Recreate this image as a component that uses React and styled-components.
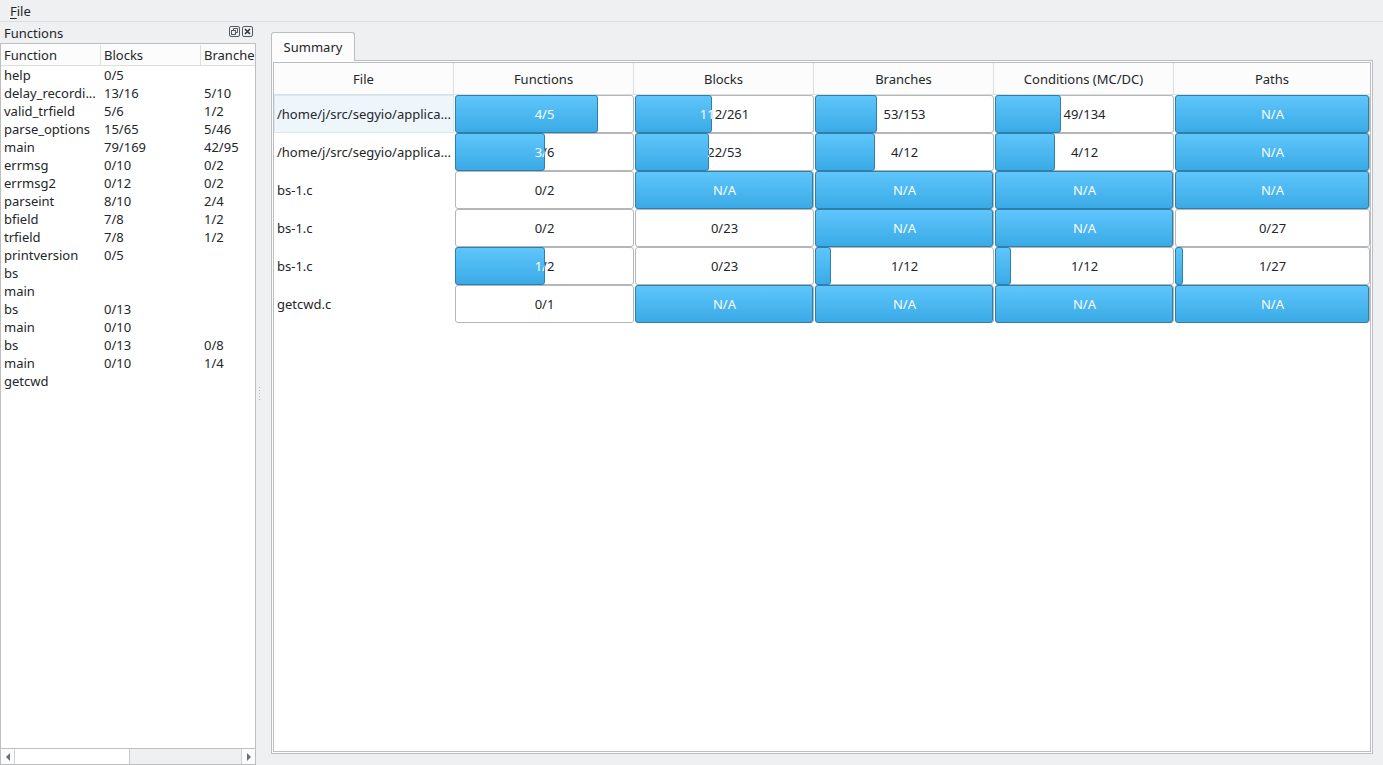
import React from "react";
import styled, { createGlobalStyle } from "styled-components";

const GlobalStyle = createGlobalStyle`
  html, body { margin: 0; padding: 0; }
  body {
    font-family: "Noto Sans", "DejaVu Sans", sans-serif;
    font-size: 13px;
    color: #232629;
    background: #eff0f1;
  }
  * { box-sizing: border-box; }
`;

const functions = [
  ["help", "0/5", ""],
  ["delay_recordi...", "13/16", "5/10"],
  ["valid_trfield", "5/6", "1/2"],
  ["parse_options", "15/65", "5/46"],
  ["main", "79/169", "42/95"],
  ["errmsg", "0/10", "0/2"],
  ["errmsg2", "0/12", "0/2"],
  ["parseint", "8/10", "2/4"],
  ["bfield", "7/8", "1/2"],
  ["trfield", "7/8", "1/2"],
  ["printversion", "0/5", ""],
  ["bs", "", ""],
  ["main", "", ""],
  ["bs", "0/13", ""],
  ["main", "0/10", ""],
  ["bs", "0/13", "0/8"],
  ["main", "0/10", "1/4"],
  ["getcwd", "", ""],
];

const NA = null;
const files = [
  { name: "/home/j/src/segyio/applica...", hover: true, cells: [[4, 5], [112, 261], [53, 153], [49, 134], NA] },
  { name: "/home/j/src/segyio/applica...", cells: [[3, 6], [22, 53], [4, 12], [4, 12], NA] },
  { name: "bs-1.c", cells: [[0, 2], NA, NA, NA, NA] },
  { name: "bs-1.c", cells: [[0, 2], [0, 23], NA, NA, [0, 27]] },
  { name: "bs-1.c", cells: [[1, 2], [0, 23], [1, 12], [1, 12], [1, 27]] },
  { name: "getcwd.c", cells: [[0, 1], NA, NA, NA, NA] },
];

const columns = ["File", "Functions", "Blocks", "Branches", "Conditions (MC/DC)", "Paths"];

const Window = styled.div`
  width: 1383px;
  height: 765px;
  display: flex;
  flex-direction: column;
  background: #eff0f1;
  overflow: hidden;
`;

const MenuBar = styled.div`
  height: 22px;
  display: flex;
  align-items: center;
  border-bottom: 1px solid #dcdee0;
`;

const MenuItem = styled.span`
  padding: 0 10px;
  line-height: 20px;
  u { text-decoration: underline; text-underline-offset: 2px; }
`;

const Main = styled.div`
  flex: 1;
  display: flex;
  min-height: 0;
`;

const Dock = styled.div`
  width: 256px;
  display: flex;
  flex-direction: column;
`;

const DockTitle = styled.div`
  height: 21px;
  display: flex;
  align-items: center;
  justify-content: space-between;
  padding: 0 3px 0 4px;
`;

const DockButtons = styled.div`
  display: flex;
  gap: 2px;
  margin-top: -2px;
  svg { display: block; }
`;

const Tree = styled.div`
  flex: 1;
  display: flex;
  flex-direction: column;
  background: #fff;
  border: 1px solid #bcbebf;
  min-height: 0;
  overflow: hidden;
`;

const TreeHeader = styled.div`
  height: 22px;
  display: flex;
  padding-top: 1px;
  border-bottom: 1px solid #dcdee0;
  background: #fcfcfc;
`;

const TreeHeadCell = styled.div`
  width: ${(p) => p.$w || 100}px;
  flex: none;
  padding-left: 3px;
  line-height: 20px;
  white-space: nowrap;
  overflow: hidden;
  border-right: 1px solid #dcdee0;
  &:last-child { border-right: none; }
`;

const TreeBody = styled.div`
  flex: 1;
`;

const TreeRow = styled.div`
  height: 18px;
  display: flex;
  align-items: center;
`;

const TreeCell = styled.div`
  width: 100px;
  flex: none;
  padding-left: 3px;
  white-space: nowrap;
  overflow: hidden;
`;

const HScroll = styled.div`
  height: 16px;
  display: flex;
  border-top: 1px solid #bcbebf;
`;

const ScrollArrow = styled.div`
  width: 14px;
  display: flex;
  align-items: center;
  justify-content: center;
  background: #fcfcfc;
  border-${(p) => (p.$right ? "left" : "right")}: 1px solid #d0d2d3;
`;

const ScrollThumb = styled.div`
  width: 115px;
  background: #fff;
  border-right: 1px solid #c8cacb;
`;

const ScrollTrack = styled.div`
  flex: 1;
  background: #eff0f1;
`;

const Splitter = styled.div`
  width: 15px;
  display: flex;
  align-items: center;
  padding-left: 3px;
`;

const Grip = styled.div`
  width: 1px;
  height: 14px;
  background: repeating-linear-gradient(#b8babc 0 1px, transparent 1px 3px);
`;

const TabArea = styled.div`
  flex: 1;
  display: flex;
  flex-direction: column;
  padding: 10px 10px 11px 0;
`;

const TabBar = styled.div`
  height: 28px;
  display: flex;
  align-items: flex-end;
`;

const Tab = styled.div`
  width: 84px;
  height: 29px;
  margin-bottom: -1px;
  position: relative;
  z-index: 1;
  background: #fcfcfc;
  border: 1px solid #bcbebf;
  border-bottom: none;
  border-radius: 3px 3px 0 0;
  display: flex;
  align-items: center;
  justify-content: center;
  padding-bottom: 1px;
`;

const Pane = styled.div`
  flex: 1;
  display: flex;
  background: #fcfcfc;
  border: 1px solid #bcbebf;
  padding: 1px;
`;

const Table = styled.div`
  flex: 1;
  background: #fff;
  border: 1px solid #bcbebf;
  display: flex;
  flex-direction: column;
`;

const Grid = styled.div`
  display: grid;
  grid-template-columns: repeat(5, 180px) 1fr;
`;

const HeadCell = styled.div`
  height: 32px;
  display: flex;
  align-items: center;
  justify-content: center;
  background: #fcfcfc;
  border-right: 1px solid #dcdee0;
  border-bottom: 1px solid #dcdee0;
  &:nth-child(6) { border-right: none; }
`;

const FileCell = styled.div`
  height: 38px;
  display: flex;
  align-items: center;
  padding-left: 2px;
  white-space: nowrap;
  background: ${(p) => (p.$hover ? "#eef6fc" : "#fff")};
  border: 1px solid ${(p) => (p.$hover ? "#d4e9f7" : "transparent")};
`;

const BarBox = styled.div`
  position: relative;
  height: 38px;
  border: 1px solid #b4b6b8;
  border-radius: 3px;
  background: #fff;
  display: flex;
  align-items: center;
  justify-content: center;
  margin: 0 0 0 1px;
`;

const Fill = styled.div`
  position: absolute;
  left: -1px;
  top: -1px;
  bottom: -1px;
  border: 1px solid #2f7fad;
  border-radius: 3px;
  background: linear-gradient(#5ec6fb, #3aaae6);
`;

const WhiteText = styled.div`
  position: absolute;
  inset: 0;
  display: flex;
  align-items: center;
  justify-content: center;
  color: #fcfcfc;
`;

function Bar({ value }) {
  const text = value ? `${value[0]}/${value[1]}` : "N/A";
  const pct = value ? (value[0] / value[1]) * 100 : 100;
  return (
    <BarBox>
      <span>{text}</span>
      {pct > 0 && (
        <>
          <Fill style={{ width: `calc(${pct}% + 1px)` }} />
          <WhiteText style={{ clipPath: `inset(0 ${100 - pct}% 0 0)` }}>{text}</WhiteText>
        </>
      )}
    </BarBox>
  );
}

function FloatIcon() {
  return (
    <svg width="11" height="11" viewBox="0 0 11 11">
      <rect x="0.5" y="0.5" width="10" height="10" rx="1.5" fill="none" stroke="#555a5e" />
      <rect x="2.5" y="4.5" width="4" height="4" fill="none" stroke="#555a5e" />
      <path d="M4.5 4.5V2.5H8.5V6.5H6.5" fill="none" stroke="#555a5e" />
    </svg>
  );
}

function CloseIcon() {
  return (
    <svg width="11" height="11" viewBox="0 0 11 11">
      <rect x="0.5" y="0.5" width="10" height="10" rx="1.5" fill="none" stroke="#555a5e" />
      <path d="M3 3L8 8M8 3L3 8" stroke="#31363b" strokeWidth="1.6" />
    </svg>
  );
}

function Arrow({ right }) {
  return (
    <svg width="6" height="8" viewBox="0 0 6 8">
      <path d={right ? "M1 0L5 4L1 8Z" : "M5 0L1 4L5 8Z"} fill="#6b7074" />
    </svg>
  );
}

export default function App() {
  return (
    <Window>
      <GlobalStyle />
      <MenuBar>
        <MenuItem><u>F</u>ile</MenuItem>
      </MenuBar>
      <Main>
        <Dock>
          <DockTitle>
            <span>Functions</span>
            <DockButtons>
              <FloatIcon />
              <CloseIcon />
            </DockButtons>
          </DockTitle>
          <Tree>
            <TreeHeader>
              <TreeHeadCell>Function</TreeHeadCell>
              <TreeHeadCell>Blocks</TreeHeadCell>
              <TreeHeadCell $w={60}>Branches</TreeHeadCell>
            </TreeHeader>
            <TreeBody>
              {functions.map((f, i) => (
                <TreeRow key={i}>
                  <TreeCell>{f[0]}</TreeCell>
                  <TreeCell>{f[1]}</TreeCell>
                  <TreeCell>{f[2]}</TreeCell>
                </TreeRow>
              ))}
            </TreeBody>
            <HScroll>
              <ScrollArrow><Arrow /></ScrollArrow>
              <ScrollThumb />
              <ScrollTrack />
              <ScrollArrow $right><Arrow right /></ScrollArrow>
            </HScroll>
          </Tree>
        </Dock>
        <Splitter><Grip /></Splitter>
        <TabArea>
          <TabBar>
            <Tab>Summary</Tab>
          </TabBar>
          <Pane>
            <Table>
              <Grid>
                {columns.map((c) => (
                  <HeadCell key={c}>{c}</HeadCell>
                ))}
                {files.map((f, i) => (
                  <React.Fragment key={i}>
                    <FileCell $hover={f.hover}>{f.name}</FileCell>
                    {f.cells.map((v, j) => (
                      <Bar key={j} value={v} />
                    ))}
                  </React.Fragment>
                ))}
              </Grid>
            </Table>
          </Pane>
        </TabArea>
      </Main>
    </Window>
  );
}
